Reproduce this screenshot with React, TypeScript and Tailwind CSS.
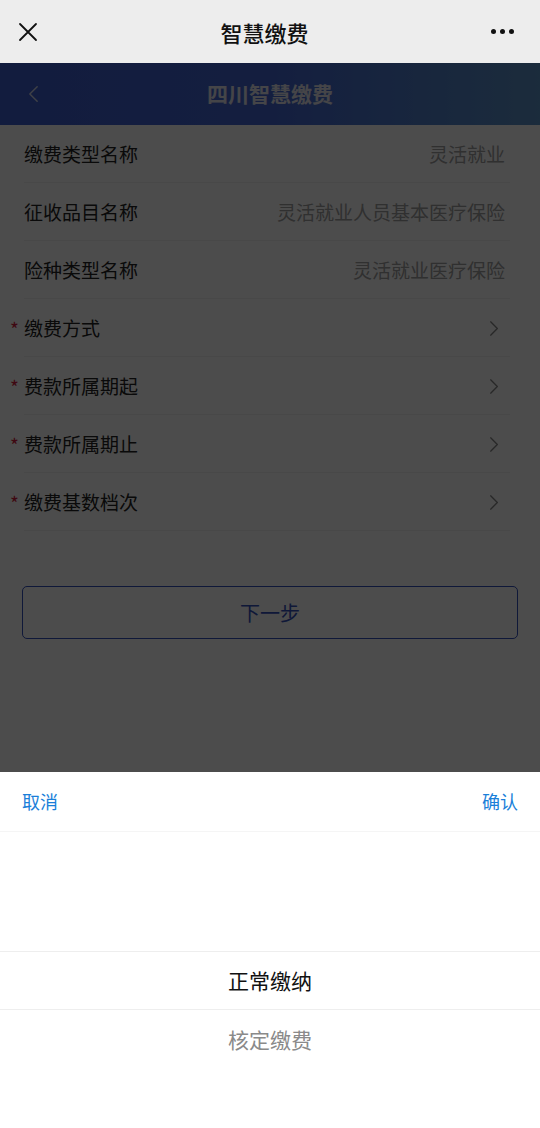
import React from "react";

const fields = [
  { label: "缴费类型名称", value: "灵活就业" },
  { label: "征收品目名称", value: "灵活就业人员基本医疗保险" },
  { label: "险种类型名称", value: "灵活就业医疗保险" },
  { label: "缴费方式", required: true },
  { label: "费款所属期起", required: true },
  { label: "费款所属期止", required: true },
  { label: "缴费基数档次", required: true },
];

const options = ["正常缴纳", "核定缴费"];

const Chevron = ({ className, dir = "right" }: { className?: string; dir?: "left" | "right" }) => (
  <svg viewBox="0 0 12 20" className={className} fill="none" stroke="currentColor" strokeWidth="1.6" strokeLinecap="round" strokeLinejoin="round">
    {dir === "right" ? <path d="M2 2l8 8-8 8" /> : <path d="M10 2L2 10l8 8" />}
  </svg>
);

const App = () => {
  return (
    <div
      className="relative w-[540px] h-[1128px] overflow-hidden bg-white"
      style={{ fontFamily: '"Noto Sans CJK SC", "Noto Sans", sans-serif' }}
    >
      {/* wechat title bar */}
      <header className="h-[63px] bg-[#ededed] flex items-center justify-between px-[18px]">
        <svg viewBox="0 0 20 20" className="w-[20px] h-[20px] text-[#111]" stroke="currentColor" strokeWidth="1.8" strokeLinecap="round">
          <path d="M2 2l16 16M18 2L2 18" />
        </svg>
        <span className="text-[22px] font-medium text-[#111] leading-none">智慧缴费</span>
        <div className="flex items-center gap-[4px] pr-[8px]">
          <span className="w-[5px] h-[5px] rounded-full bg-[#111]" />
          <span className="w-[5px] h-[5px] rounded-full bg-[#111]" />
          <span className="w-[5px] h-[5px] rounded-full bg-[#111]" />
        </div>
      </header>

      {/* page */}
      <div className="flex flex-col">
        <div className="h-[62px] bg-gradient-to-r from-[#3e5ed0] via-[#4466d4] to-[#5d93c8] flex items-center relative">
          <Chevron dir="left" className="absolute left-[28px] w-[11px] h-[20px] text-[#d0d6ea]" />
          <span className="mx-auto text-[21px] font-bold text-[#e6e8f0]">四川智慧缴费</span>
        </div>

        {fields.map((f) => (
          <div key={f.label} className="h-[58px] flex items-center pl-[24px] pr-[35px] relative">
            {f.required && (
              <span className="absolute left-[10px] top-[16px] text-[19px] text-[#d41c3c]">*</span>
            )}
            <span className="text-[19px] text-[#222]">{f.label}</span>
            <span className="ml-auto text-[19px] text-[#a0a0a0]">{f.value}</span>
            {f.required && <Chevron className="ml-auto mr-[6px] w-[10px] h-[17px] text-[#888]" />}
            <span className="absolute left-[24px] right-[30px] bottom-0 h-px bg-[#f2f2f2]" />
          </div>
        ))}

        <button className="mt-[55px] mx-[22px] h-[53px] rounded-[5px] border-[1.5px] border-[#3450c0] text-[#3450bc] text-[20px]">
          下一步
        </button>
      </div>

      {/* mask */}
      <div className="absolute left-0 right-0 top-[63px] bottom-0 bg-black/70" />

      {/* picker sheet */}
      <div className="absolute left-0 right-0 bottom-0 h-[356px] bg-white flex flex-col">
        <div className="h-[60px] flex items-center justify-between px-[22px] border-b border-[#f5f5f5]">
          <span className="text-[18px] text-[#1a7fd9]">取消</span>
          <span className="text-[18px] text-[#1a7fd9]">确认</span>
        </div>
        <div className="flex flex-col pt-[119px]">
          {options.map((o, i) => (
            <div
              key={o}
              className={
                i === 0
                  ? "h-[59px] flex items-center justify-center border-y border-[#eeeeee] text-[21px] text-[#111]"
                  : "h-[59px] flex items-center justify-center text-[21px] text-[#8a8a8a]"
              }
            >
              {o}
            </div>
          ))}
        </div>
      </div>
    </div>
  );
};

export default App;
